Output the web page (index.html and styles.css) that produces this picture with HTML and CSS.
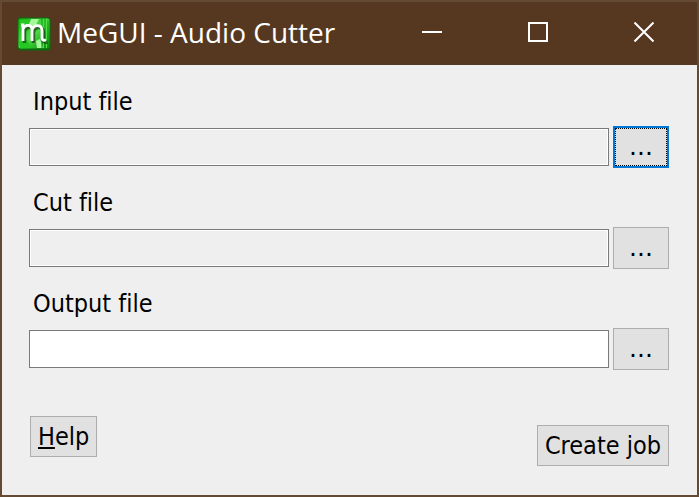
FILE: index.html
```html
<!DOCTYPE html>
<html lang="en">
<head>
<meta charset="utf-8">
<title>MeGUI - Audio Cutter</title>
<link rel="stylesheet" href="styles.css">
</head>
<body>
<main class="window">
  <header class="titlebar">
    <svg class="logo" viewBox="0 0 34 34" aria-hidden="true">
      <defs>
        <linearGradient id="leaf" x1="0" y1="0" x2="1" y2="1">
          <stop offset="0" stop-color="#12b012"/>
          <stop offset=".5" stop-color="#4fdc48"/>
          <stop offset="1" stop-color="#078a0a"/>
        </linearGradient>
      </defs>
      <rect x=".5" y=".5" width="33" height="33" rx="3" fill="#0b6b0c"/>
      <rect x="1.500" y="1.500" width="31" height="30" rx="2" fill="url(#leaf)"/>
      <path d="M3 3h11l-6 6-5 3zM2 25l7-3 6 9H3z" fill="#25c822"/>
      <path d="M14 2h8l-3 6-8 2zM19 24l4-2 3 9h-6z" fill="#a5f79c"/>
      <path d="M25 2v29M28 2v29M31 3v27" stroke="#0a9a0c"/>
      <path d="M26.500 2v29M29.500 2v29" stroke="#4fe048"/>
      <path d="M6 8v16M6 12c2-5 9-5 9 1v11M15 13c2-6 10-6 10 1v7q0 3 4 2" transform="translate(1.500 2)" fill="none" stroke="#173c16" stroke-width="3.500" opacity=".7"/>
      <path d="M4 8h2v16M6 12c2-5 9-5 9 1v11M15 13c2-6 10-6 10 1v7q0 3 4 2" fill="none" stroke="#fff" stroke-width="2.800"/>
    </svg>
    <h1 class="title">MeGUI - Audio Cutter</h1>
    <div class="controls">
      <button class="control" type="button" aria-label="Minimize"><svg viewBox="0 0 20 20"><path d="M0 10h20"/></svg></button>
      <button class="control" type="button" aria-label="Maximize"><svg viewBox="0 0 20 20"><path d="M1 1h18v18H1z"/></svg></button>
      <button class="control close" type="button" aria-label="Close"><svg viewBox="0 0 20 20"><path d="M.5.5l19 19M19.500.5l-19 19"/></svg></button>
    </div>
  </header>
  <form class="form">
    <div class="field">
      <label for="input-file">Input file</label>
      <div class="row">
        <input id="input-file" type="text" readonly>
        <button class="button browse focused" type="button" aria-label="Browse input file">...</button>
      </div>
    </div>
    <div class="field">
      <label for="cut-file">Cut file</label>
      <div class="row">
        <input id="cut-file" type="text" readonly>
        <button class="button browse" type="button" aria-label="Browse cut file">...</button>
      </div>
    </div>
    <div class="field">
      <label for="output-file">Output file</label>
      <div class="row">
        <input id="output-file" type="text">
        <button class="button browse" type="button" aria-label="Browse output file">...</button>
      </div>
    </div>
    <footer class="actions">
      <button class="button" type="button"><span class="mnemonic">H</span>elp</button>
      <button class="button create" type="button">Create job</button>
    </footer>
  </form>
</main>
</body>
</html>
```
FILE: styles.css
```css
* {
  box-sizing: border-box;
}

body {
  margin: 0;
  font-family: "DejaVu Sans Condensed", "Noto Sans", sans-serif;
  font-size: 25px;
  font-variant-ligatures: none;
  color: #000;
}

.window {
  display: flex;
  flex-direction: column;
  min-height: 100vh;
  border: 2px solid #644a33;
  background: #efefef;
}

.titlebar {
  display: flex;
  align-items: center;
  height: 63px;
  padding-left: 15px;
  background: #563820;
  color: #fff;
}

.logo {
  flex: none;
  width: 34px;
  height: 34px;
}

.title {
  flex: 1;
  margin: 0 0 0 6px;
  padding-bottom: 4px;
  font-family: "Open Sans", sans-serif;
  font-size: 28px;
  font-weight: 400;
  line-height: 36px;
  white-space: nowrap;
}

.controls {
  display: flex;
  height: 100%;
}

.control {
  display: flex;
  align-items: center;
  justify-content: center;
  width: 106px;
  padding: 0 0 3px;
  border: 0;
  background: none;
}

.control svg {
  width: 20px;
  height: 20px;
  fill: none;
  stroke: #fff;
  stroke-width: 2;
}

.form {
  display: flex;
  flex-direction: column;
  gap: 17px;
  padding: 19px 28px 28px 27px;
}

.field {
  display: flex;
  flex-direction: column;
  gap: 6px;
}

label {
  padding-left: 4px;
  line-height: 36px;
}

.row {
  display: flex;
  align-items: center;
  gap: 4px;
}

input {
  flex: 1;
  min-width: 0;
  height: 38px;
  padding: 0 6px;
  border: 1px solid #7a7a7a;
  border-radius: 0;
  outline: 0;
  background: #fff;
  font: inherit;
}

input:read-only {
  background: #efefef;
  box-shadow: inset 0 0 0 1px #fff;
}

.button {
  height: 41px;
  padding: 0 7px;
  border: 1px solid #adadad;
  background: #e1e1e1;
  color: #000;
  font: inherit;
  line-height: 36px;
}

.browse {
  width: 56px;
  height: 42px;
  padding: 0;
  font-family: "DejaVu Sans", sans-serif;
}

.focused {
  border: 2px solid #0078d7;
  outline: 1px dotted #000;
  outline-offset: -3px;
}

.mnemonic {
  text-decoration: underline;
  text-decoration-thickness: 2px;
  text-underline-offset: 2px;
}

.actions {
  display: flex;
  justify-content: space-between;
  align-items: flex-start;
  margin: 29px 0 0 1px;
}

.create {
  margin-top: 9px;
}
```
